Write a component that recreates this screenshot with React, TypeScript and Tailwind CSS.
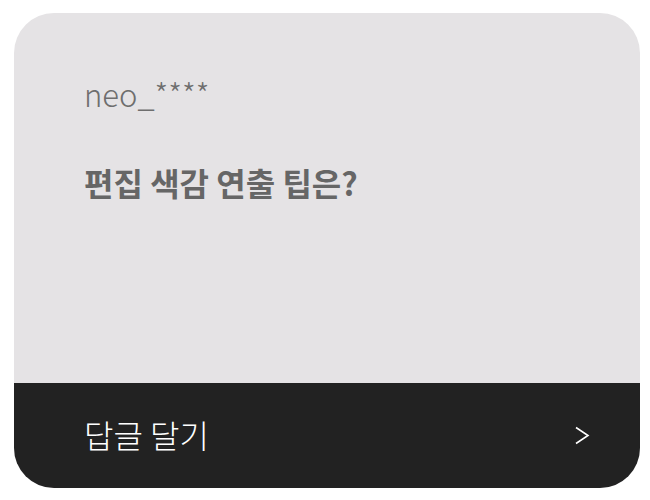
export default function App() {
  return (
    <div className="min-h-[500px] w-[650px] bg-white pl-[14px] pt-[13px] font-['Noto_Sans_CJK_KR','Noto_Sans',sans-serif]">
      <div className="flex h-[475px] w-[626px] flex-col overflow-hidden rounded-[40px] bg-[#e5e3e5]">
        {/* Question */}
        <div className="flex flex-1 flex-col pl-[70px] pt-[61px]">
          <p className="text-[31px] font-light leading-[40px] text-[#6e6e6e]">neo_****</p>
          <h2 className="mt-[48px] text-[32px] font-bold leading-[40px] text-[#666666]">편집 색감 연출 팁은?</h2>
        </div>

        {/* Reply bar */}
        <button className="flex h-[105px] items-center justify-between bg-[#222222] pl-[70px] pr-[50px] text-white">
          <span className="-mt-[4px] text-[32px] font-light leading-[40px]">답글 달기</span>
          <svg width="16" height="20" viewBox="0 0 16 20" fill="none" stroke="currentColor" strokeWidth={1.6}>
            <path d="M2 1.5l12 8-12 8" />
          </svg>
        </button>
      </div>
    </div>
  );
}
